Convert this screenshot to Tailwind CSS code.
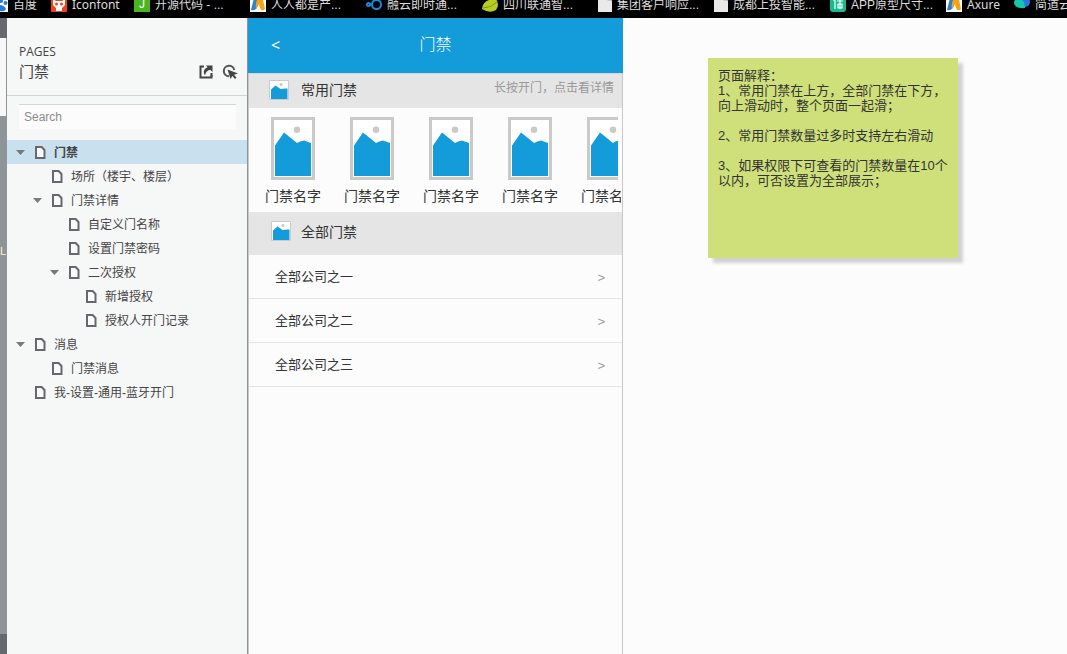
<!DOCTYPE html>
<html lang="zh-CN">
<head>
<meta charset="utf-8">
<title>门禁</title>
<script src="https://cdn.jsdelivr.net/npm/@tailwindcss/browser@4"></script>
</head>
<body class="flex flex-col h-screen overflow-hidden bg-[#fcfcfc] font-['Liberation_Sans','Noto_Sans_CJK_SC',sans-serif] text-xs text-[#333]">

<svg class="hidden" aria-hidden="true">
  <symbol id="page" viewBox="0 0 11 13"><path d="M1 1h5.600L9.500 4V12H1z" fill="#fafafa" stroke="#65686d" stroke-width="2"/></symbol>
  <symbol id="caret" viewBox="0 0 9 5"><path d="M0 0h9L4.500 5z" fill="#77797c"/></symbol>
  <symbol id="blank" viewBox="0 0 14 16"><path d="M0 0h9.500L14 4.500V16H0z" fill="#e9e9e9"/><path d="M9.500 0v4.500H14z" fill="#aaa"/></symbol>
  <symbol id="photo" viewBox="0 0 44 63"><path d="M1.500 1.500h41v60h-41z" fill="#fff" stroke="#cbcac8" stroke-width="3"/><circle cx="26" cy="12.800" r="3.300" fill="#cbcac8"/><path d="M4 28.500 13 15.500 26 26q3-2 7-2.500l7 2.500v33H4z" fill="#149bd9"/></symbol>
  <symbol id="photo-small" viewBox="0 0 20 20"><path d="M.5.5h19v19H.5z" fill="#fff" stroke="#cbcac8"/><circle cx="12" cy="4.500" r="1.600" fill="#cbcac8"/><path d="M2 9.500 6.500 5.500 11.500 9q3.500-.8 7-.5v10.500H2z" fill="#149bd9"/></symbol>
  <symbol id="axure" viewBox="0 0 16 16"><path d="M0 0h16v16H0z" fill="#fff"/><path d="M4 2q3-3 6 0L8 10q-2 5-7 4z" fill="#2b83cf"/><path d="M8 2q4-3 5 2l2 9q-3 3-5-1l-1-4-3 5q-1-6 2-11z" fill="#f5a314"/></symbol>
</svg>

<nav aria-label="书签" class="flex h-[18px] shrink-0 items-end overflow-hidden bg-black pb-1 leading-[18px] text-[#ddd] whitespace-nowrap">
  <a href="#" class="flex w-[51px] shrink-0 gap-[5px]"><svg class="h-4 w-2" viewBox="8 0 8 16"><path d="M8 0h8v16H8z" fill="#fff"/><g fill="#2b78dc"><circle cx="9" cy="5" r="2"/><circle cx="13.500" cy="7" r="2"/><path d="M8 9q4 0 6 4-1 3-6 2z"/></g></svg>百度</a>
  <a href="#" class="flex w-[83px] shrink-0 gap-[5px]"><svg class="size-4" viewBox="0 0 16 16"><rect width="16" height="16" rx="1" fill="#f4431c"/><path d="M2 3 5 5h6l3-2v6l-3 3v3H5v-3L2 9z" fill="#fff"/><circle cx="5.500" cy="8" r="1.500" fill="#f4431c"/><circle cx="10.500" cy="8" r="1.500" fill="#f4431c"/></svg><span class="font-['Noto_Sans']">Iconfont</span></a>
  <a href="#" class="flex w-[116px] shrink-0 gap-[5px]"><span class="flex size-4 items-center justify-center bg-[#4bb51f] text-white">J</span>开源代码 - ...</a>
  <a href="#" class="flex w-[116px] shrink-0 gap-[5px]"><svg class="size-4"><use href="#axure"/></svg>人人都是产...</a>
  <a href="#" class="flex w-[116px] shrink-0 gap-[5px]"><svg class="size-4" viewBox="0 0 16 16" fill="none" stroke="#1788e0" stroke-width="2"><circle cx="10.500" cy="8.500" r="4.500"/><circle cx="2.500" cy="8.500" r="1.500"/><path d="M4 8.500h3"/></svg>融云即时通...</a>
  <a href="#" class="flex w-[116px] shrink-0 gap-[5px]"><svg class="size-4" viewBox="0 0 16 16"><path d="M0 13Q1 3 14 3q4 6 0 11-6 4-14-1z" fill="#b8cd24"/><path d="M1 12q8 0 14-6" stroke="#7e981a" fill="none"/></svg>四川联通智...</a>
  <a href="#" class="flex w-[116px] shrink-0 gap-[5px]"><svg class="h-4 w-[14px]"><use href="#blank"/></svg>集团客户响应...</a>
  <a href="#" class="flex w-[116px] shrink-0 gap-[5px]"><svg class="h-4 w-[14px]"><use href="#blank"/></svg>成都上投智能...</a>
  <a href="#" class="flex w-[116px] shrink-0 gap-[5px]"><svg class="size-4" viewBox="0 0 16 16"><rect width="16" height="16" rx="3" fill="#19b991"/><path d="M3 4h2v9M7 5h6M8 8h4v4H8zM10 3v10" stroke="#fff" fill="none" stroke-width="1.200"/></svg>APP原型尺寸...</a>
  <a href="#" class="flex w-[68px] shrink-0 gap-[5px]"><svg class="size-4"><use href="#axure"/></svg><span class="font-['Noto_Sans']">Axure</span></a>
  <a href="#" class="flex shrink-0 gap-[5px]"><svg class="size-4" viewBox="0 0 16 16"><circle cx="11" cy="6" r="5" fill="#2b75dc"/><path d="M0 7q0-4 5-5 6 2 6 10-10 1-11-5z" fill="#16c5ac"/></svg>简道云</a>
</nav>

<div class="flex min-h-0 flex-1">
  <div class="flex w-[7px] shrink-0 flex-col overflow-hidden bg-[#8f9498]">
    <div class="h-5 shrink-0 bg-[#65686d]"></div>
    <div class="h-[78px] shrink-0 border-r border-[#8f9498] bg-[#f8f8f8]"></div>
    <div class="flex-1 pt-[127px] text-[11px] leading-4 text-[#fff3cf]">L</div>
    <div class="h-5 shrink-0 bg-[#65686d]"></div>
  </div>

  <aside class="w-[241px] shrink-0 border-r border-[#8f9498] bg-[#f6f7f7] text-[#444]">
    <header class="border-b border-[#d5d5d5] pt-[26px] pr-[9px] pb-3 pl-3">
      <p class="font-['Open_Sans'] leading-4">PAGES</p>
      <div class="flex items-center justify-between">
        <h1 class="pt-px text-[15px] leading-[22px]">门禁</h1>
        <div class="flex items-center gap-2">
          <button aria-label="在新窗口打开" class="size-4"><svg class="size-4" viewBox="0 0 16 16"><path d="M6 2.500H2.500v11h11V11" fill="none" stroke="#444" stroke-width="2"/><path d="M13.500 13V9" stroke="#444" stroke-width="2"/><path d="M8 1.500h6.500V8l-2-2Q8 6 7 11.500 3.500 6 9.500 3.300z" fill="#444"/></svg></button>
          <button aria-label="高亮交互元素" class="size-4"><svg class="size-4" viewBox="0 0 16 16"><path d="M12.300 6A5.300 5.300 0 1 0 7 12.300" fill="none" stroke="#555" stroke-width="2"/><path d="M5.500 5.500 16 9.500l-4 1.200 2.500 3-1.500 1.300-2.600-3L8.500 15z" fill="#444"/></svg></button>
        </div>
      </div>
    </header>
    <div class="px-3 pt-2 pb-[11px]">
      <input type="search" aria-label="Search" placeholder="Search" class="block h-[25px] w-[217px] border-t border-[#d5d5d5] bg-[#fcfcfc] px-[5px] text-xs placeholder:text-[#8c8c8c]">
    </div>
    <ul class="leading-6">
      <li>
        <div class="flex h-6 items-center bg-[#c9e0ef] pt-px pl-[9px]"><button aria-label="折叠" class="mr-[10px]"><svg class="h-[5px] w-[9px]"><use href="#caret"/></svg></button><a href="#" class="flex items-center gap-2 font-bold"><svg class="h-[13px] w-[11px]"><use href="#page"/></svg>门禁</a></div>
        <ul class="pl-[17px]">
          <li class="flex h-6 items-center pt-px pl-7"><a href="#" class="flex items-center gap-2"><svg class="h-[13px] w-[11px]"><use href="#page"/></svg>场所（楼宇、楼层）</a></li>
          <li>
            <div class="flex h-6 items-center pt-px pl-[9px]"><button aria-label="折叠" class="mr-[10px]"><svg class="h-[5px] w-[9px]"><use href="#caret"/></svg></button><a href="#" class="flex items-center gap-2"><svg class="h-[13px] w-[11px]"><use href="#page"/></svg>门禁详情</a></div>
            <ul class="pl-[17px]">
              <li class="flex h-6 items-center pt-px pl-7"><a href="#" class="flex items-center gap-2"><svg class="h-[13px] w-[11px]"><use href="#page"/></svg>自定义门名称</a></li>
              <li class="flex h-6 items-center pt-px pl-7"><a href="#" class="flex items-center gap-2"><svg class="h-[13px] w-[11px]"><use href="#page"/></svg>设置门禁密码</a></li>
              <li>
                <div class="flex h-6 items-center pt-px pl-[9px]"><button aria-label="折叠" class="mr-[10px]"><svg class="h-[5px] w-[9px]"><use href="#caret"/></svg></button><a href="#" class="flex items-center gap-2"><svg class="h-[13px] w-[11px]"><use href="#page"/></svg>二次授权</a></div>
                <ul class="pl-[17px]">
                  <li class="flex h-6 items-center pt-px pl-7"><a href="#" class="flex items-center gap-2"><svg class="h-[13px] w-[11px]"><use href="#page"/></svg>新增授权</a></li>
                  <li class="flex h-6 items-center pt-px pl-7"><a href="#" class="flex items-center gap-2"><svg class="h-[13px] w-[11px]"><use href="#page"/></svg>授权人开门记录</a></li>
                </ul>
              </li>
            </ul>
          </li>
        </ul>
      </li>
      <li>
        <div class="flex h-6 items-center pt-px pl-[9px]"><button aria-label="折叠" class="mr-[10px]"><svg class="h-[5px] w-[9px]"><use href="#caret"/></svg></button><a href="#" class="flex items-center gap-2"><svg class="h-[13px] w-[11px]"><use href="#page"/></svg>消息</a></div>
        <ul class="pl-[17px]">
          <li class="flex h-6 items-center pt-px pl-7"><a href="#" class="flex items-center gap-2"><svg class="h-[13px] w-[11px]"><use href="#page"/></svg>门禁消息</a></li>
        </ul>
      </li>
      <li class="flex h-6 items-center pt-px pl-7"><a href="#" class="flex items-center gap-2"><svg class="h-[13px] w-[11px]"><use href="#page"/></svg>我-设置-通用-蓝牙开门</a></li>
    </ul>
  </aside>

  <main class="flex flex-1 items-start">
    <section class="flex h-full w-[375px] shrink-0 flex-col">
      <header class="grid h-[55px] shrink-0 grid-cols-[1fr_auto_1fr] items-center bg-[#149bd9] px-[23px] pb-px text-white">
        <button aria-label="返回" class="justify-self-start font-['Noto_Sans'] text-base leading-5">&lt;</button>
        <h2 class="text-base font-light">门禁</h2>
      </header>
      <div class="flex-1 border-x border-[#c8c8c8]">
        <div class="flex h-[35px] items-start justify-between border-t border-[#d5d5d5] bg-[#e5e5e5] pr-2 pl-5">
          <h3 class="flex items-center gap-3 pt-[6px] text-sm leading-5"><svg class="size-5"><use href="#photo-small"/></svg>常用门禁</h3>
          <p class="pt-[5px] leading-[18px] text-[#999]">长按开门，点击看详情</p>
        </div>
        <ul class="mr-px flex h-[104px] gap-[23px] overflow-hidden pt-[9px] pl-4 text-sm leading-5 whitespace-nowrap">
          <li class="w-14 shrink-0"><button class="flex flex-col gap-[6px]"><svg class="ml-[6px] h-[63px] w-11"><use href="#photo"/></svg>门禁名字</button></li>
          <li class="w-14 shrink-0"><button class="flex flex-col gap-[6px]"><svg class="ml-[6px] h-[63px] w-11"><use href="#photo"/></svg>门禁名字</button></li>
          <li class="w-14 shrink-0"><button class="flex flex-col gap-[6px]"><svg class="ml-[6px] h-[63px] w-11"><use href="#photo"/></svg>门禁名字</button></li>
          <li class="w-14 shrink-0"><button class="flex flex-col gap-[6px]"><svg class="ml-[6px] h-[63px] w-11"><use href="#photo"/></svg>门禁名字</button></li>
          <li class="w-14 shrink-0"><button class="flex flex-col gap-[6px]"><span class="ml-[6px] block w-[31px] overflow-hidden"><svg class="h-[63px] w-11"><use href="#photo"/></svg></span>门禁名字</button></li>
        </ul>
        <div class="flex h-[43px] items-start bg-[#e5e5e5] pl-[22px]">
          <h3 class="flex items-start gap-[10px] pt-[9px] text-sm leading-[22px]"><svg class="size-5"><use href="#photo-small"/></svg>全部门禁</h3>
        </div>
        <ul class="text-[13px]">
          <li class="border-b border-[#e5e5e5]"><a href="#" class="flex h-[43px] items-center justify-between pr-[17px] pl-[26px]"><span>全部公司之一</span><span class="pt-[2px] text-[#999]">&gt;</span></a></li>
          <li class="border-b border-[#e5e5e5]"><a href="#" class="flex h-[43px] items-center justify-between pr-[17px] pl-[26px]"><span>全部公司之二</span><span class="pt-[2px] text-[#999]">&gt;</span></a></li>
          <li class="border-b border-[#e5e5e5]"><a href="#" class="flex h-[43px] items-center justify-between pr-[17px] pl-[26px]"><span>全部公司之三</span><span class="pt-[2px] text-[#999]">&gt;</span></a></li>
        </ul>
      </div>
    </section>

    <section class="mt-10 ml-[85px] min-h-[200px] w-[250px] bg-[#cfe07a] px-[10px] pt-[10px] text-[13px] leading-[15px] whitespace-nowrap shadow-[5px_5px_3px_#0000002b]">
      <p>页面解释：</p>
      <p>1、常用门禁在上方，全部门禁在下方，<br>向上滑动时，整个页面一起滑；</p>
      <p class="mt-[15px]">2、常用门禁数量过多时支持左右滑动</p>
      <p class="mt-[15px]">3、如果权限下可查看的门禁数量在10个<br>以内，可否设置为全部展示；</p>
    </section>
  </main>
</div>
</body>
</html>
